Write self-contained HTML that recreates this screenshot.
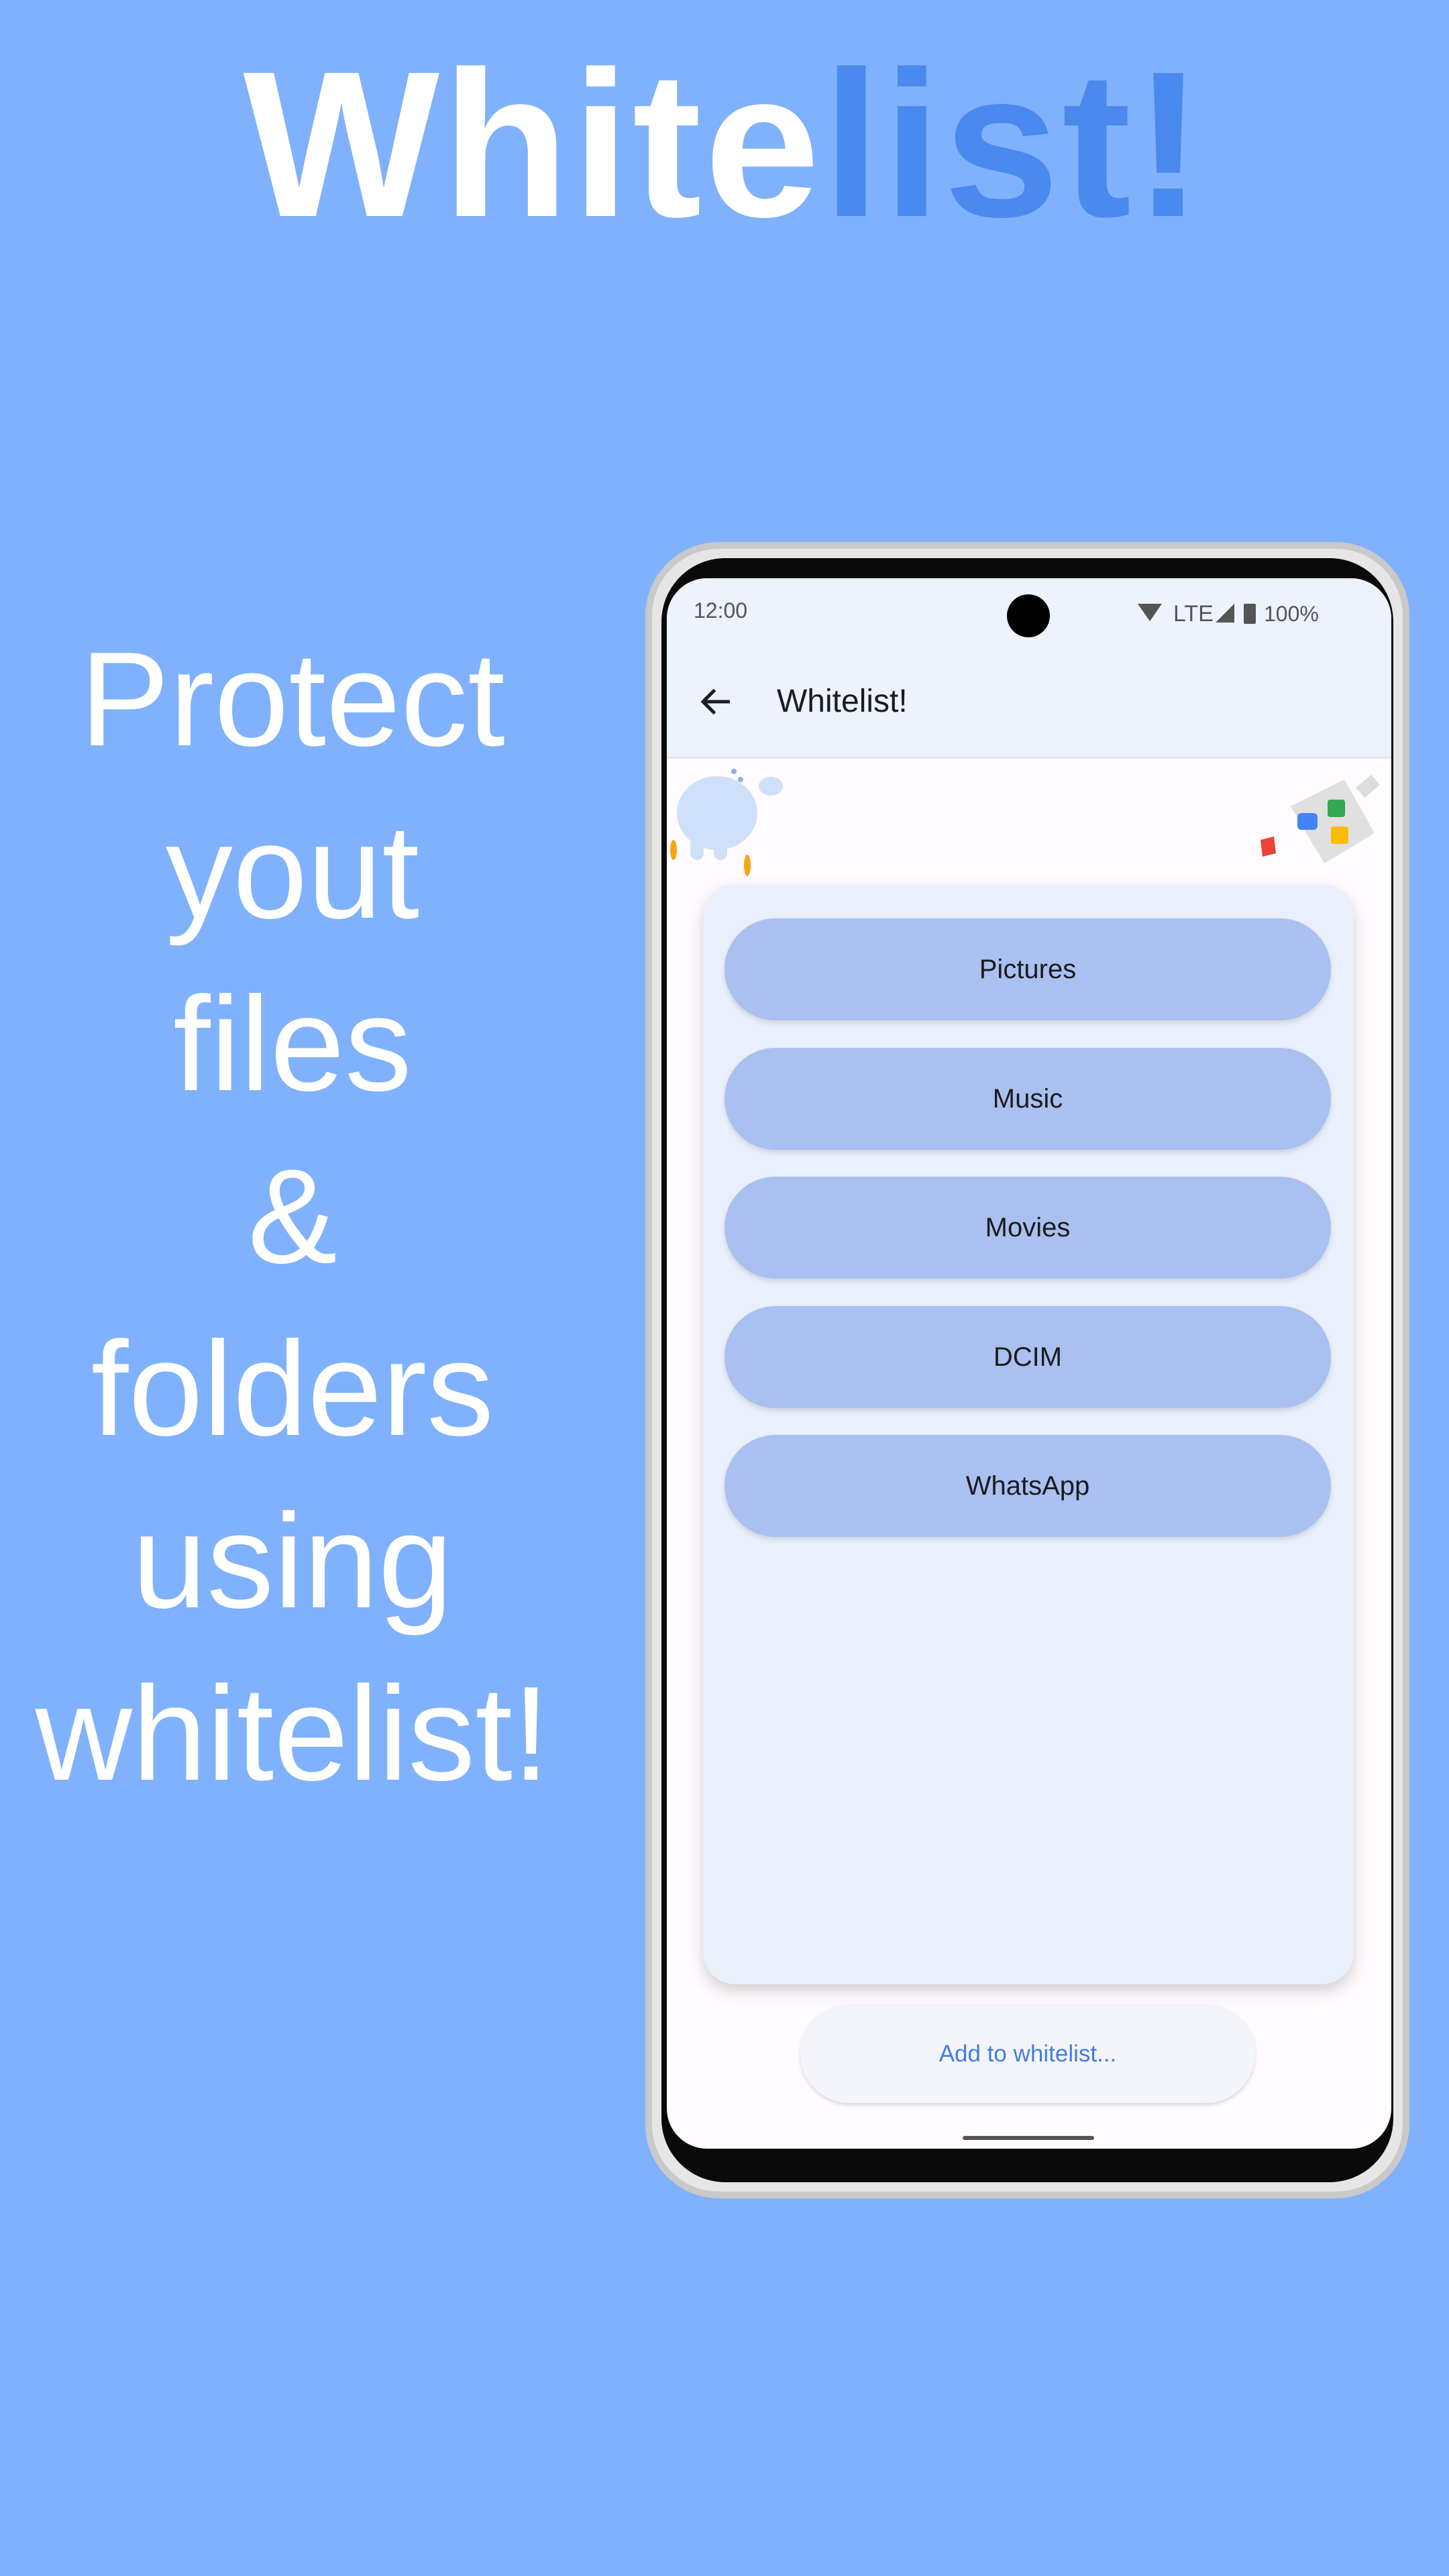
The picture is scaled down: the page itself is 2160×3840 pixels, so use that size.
<!DOCTYPE html>
<html><head><meta charset="utf-8"><style>
*{margin:0;padding:0;box-sizing:border-box}
html,body{width:2160px;height:3840px;overflow:hidden}
body{background:#80b1fd;font-family:"Liberation Sans",sans-serif;position:relative}
.title{position:absolute;left:0;width:2160px;top:60px;text-align:center;font-size:310px;font-weight:bold;color:#fff;letter-spacing:4px;line-height:310px}
.title span{color:#4a89ee}
.side{position:absolute;left:0;width:872px;text-align:center;color:#fff;font-size:200px;line-height:257px;top:914px}
.phone{position:absolute;left:962px;top:808px;width:1139px;height:2469px;border-radius:110px;background:#e6e6e6;border:10px solid #c9c9c9}
.bezel{position:absolute;left:14px;top:14px;right:14px;bottom:14px;border-radius:95px;background:#0a0a0a}
.screen{position:absolute;left:994px;top:862px;width:1080px;height:2341px;border-radius:60px;background:#fffbfe;overflow:hidden}
.appbar{position:absolute;left:0;top:0;width:1080px;height:269px;background:#edf2fd;border-bottom:3px solid #e3e5ec}
.st{position:absolute;top:30px;font-size:32px;color:#555}
.cam{position:absolute;left:507px;top:24px;width:64px;height:64px;border-radius:50%;background:#000}
.apt{position:absolute;left:164px;top:156px;font-size:48px;color:#1c1b1f}
.card{position:absolute;left:54px;top:456px;width:970px;height:1640px;border-radius:48px;background:#e9effb;box-shadow:0 10px 24px rgba(0,0,0,.18)}
.btn{position:absolute;left:32px;width:904px;height:152px;border-radius:76px;background:#a9c0f0;box-shadow:0 4px 8px rgba(0,0,0,.12);text-align:center;line-height:152px;font-size:40px;color:#1c1b1f}
.add{position:absolute;left:199px;top:2126px;width:678px;height:147px;border-radius:74px;background:#f4f5fa;box-shadow:0 3px 6px rgba(0,0,0,.15);text-align:center;line-height:147px;font-size:35px;color:#3f7fe0}
.home{position:absolute;left:441px;top:2322px;width:196px;height:6px;border-radius:3px;background:#555}
</style></head><body>
<div class="title">White<span>list!</span></div>
<div class="side">Protect<br>yout<br>files<br>&amp;<br>folders<br>using<br>whitelist!</div>
<div class="phone"><div class="bezel"></div></div>
<div class="screen">
 <div class="appbar">
  <div class="st" style="left:40px">12:00</div>
  <div class="cam"></div>
  <svg style="position:absolute;left:700px;top:32px" width="340" height="40" viewBox="0 0 340 40">
   <path d="M2 6 L38 6 L20 32 Z" fill="#555"/>
   <text x="55" y="32" font-size="34" fill="#555" font-family="Liberation Sans">LTE</text>
   <path d="M118 34 L146 6 L146 34 Z" fill="#555"/>
   <rect x="160" y="6" width="18" height="30" rx="2" fill="#555"/>
   <text x="190" y="32" font-size="32" fill="#555" font-family="Liberation Sans">100%</text>
  </svg>
  <svg style="position:absolute;left:44px;top:154px" width="60" height="60" viewBox="0 0 24 24"><path d="M20 12H5M11 5l-7 7 7 7" stroke="#1c1b1f" stroke-width="2" fill="none"/></svg>
  <div class="apt">Whitelist!</div>
 </div>
 <svg style="position:absolute;left:0;top:270px" width="200" height="200" viewBox="0 0 200 200">
  <ellipse cx="75" cy="80" rx="60" ry="55" fill="#cfe0fb"/>
  <ellipse cx="155" cy="40" rx="18" ry="14" fill="#cfe0fb"/>
  <rect x="35" y="110" width="20" height="40" rx="10" fill="#cfe0fb"/>
  <rect x="70" y="110" width="20" height="40" rx="10" fill="#cfe0fb"/>
  <circle cx="100" cy="18" r="4" fill="#8cb1ec"/><circle cx="110" cy="30" r="4" fill="#8cb1ec"/>
  <ellipse cx="10" cy="135" rx="5" ry="15" fill="#f3a712"/><ellipse cx="120" cy="158" rx="5" ry="16" fill="#f3a712"/>
 </svg>
 <svg style="position:absolute;left:880px;top:290px" width="200" height="180" viewBox="0 0 200 180">
  <path d="M50 50 L130 10 L175 90 L100 135 Z" fill="#e0e0e0"/>
  <rect x="150" y="10" width="30" height="20" transform="rotate(-40 165 20)" fill="#ddd"/>
  <rect x="60" y="60" width="30" height="25" rx="6" fill="#4284f3"/>
  <rect x="105" y="40" width="26" height="26" rx="4" fill="#34a853"/>
  <rect x="110" y="80" width="26" height="26" rx="4" fill="#fbbc04"/>
  <path d="M5 100 L25 95 L28 120 L8 125 Z" fill="#ea4335"/>
 </svg>
 <div class="card">
  <div class="btn" style="top:51px">Pictures</div>
  <div class="btn" style="top:244px">Music</div>
  <div class="btn" style="top:436px">Movies</div>
  <div class="btn" style="top:629px">DCIM</div>
  <div class="btn" style="top:821px">WhatsApp</div>
 </div>
 <div class="add">Add to whitelist...</div>
 <div class="home"></div>
</div>
</body></html>
